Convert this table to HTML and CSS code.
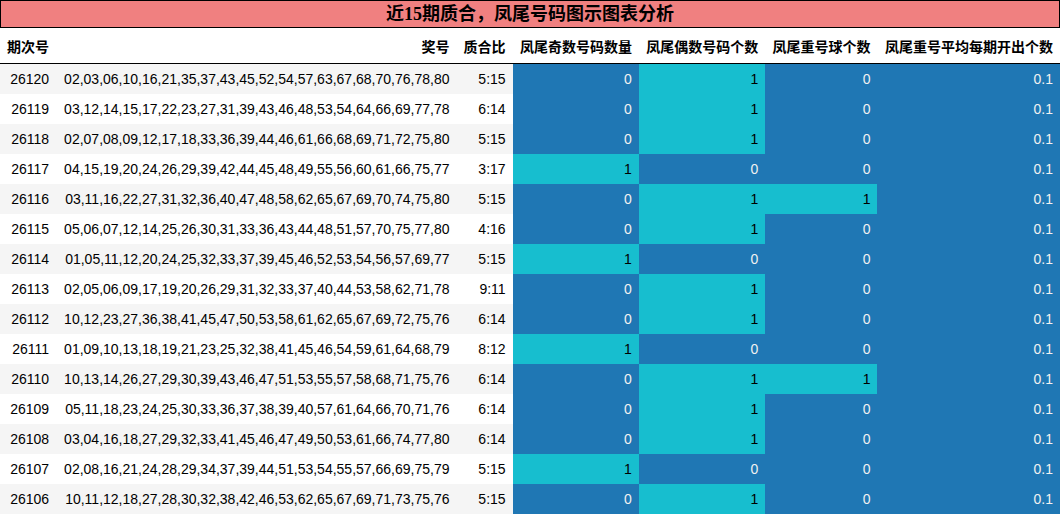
FILE: index.html
```html
<!DOCTYPE html>
<html lang="zh">
<head>
<meta charset="utf-8">
<title>近15期质合，凤尾号码图示图表分析</title>
<link rel="stylesheet" href="styles.css">
</head>
<body>
<table class="grid">
<caption class="title">近15期质合，凤尾号码图示图表分析</caption>
<thead>
<tr><th class="first">期次号</th><th>奖号</th><th>质合比</th><th>凤尾奇数号码数量</th><th>凤尾偶数号码个数</th><th>凤尾重号球个数</th><th>凤尾重号平均每期开出个数</th></tr>
</thead>
<tbody>
<tr><td>26120</td><td>02,03,06,10,16,21,35,37,43,45,52,54,57,63,67,68,70,76,78,80</td><td>5:15</td><td class="b">0</td><td class="c">1</td><td class="b">0</td><td class="b">0.1</td></tr>
<tr><td>26119</td><td>03,12,14,15,17,22,23,27,31,39,43,46,48,53,54,64,66,69,77,78</td><td>6:14</td><td class="b">0</td><td class="c">1</td><td class="b">0</td><td class="b">0.1</td></tr>
<tr><td>26118</td><td>02,07,08,09,12,17,18,33,36,39,44,46,61,66,68,69,71,72,75,80</td><td>5:15</td><td class="b">0</td><td class="c">1</td><td class="b">0</td><td class="b">0.1</td></tr>
<tr><td>26117</td><td>04,15,19,20,24,26,29,39,42,44,45,48,49,55,56,60,61,66,75,77</td><td>3:17</td><td class="c">1</td><td class="b">0</td><td class="b">0</td><td class="b">0.1</td></tr>
<tr><td>26116</td><td>03,11,16,22,27,31,32,36,40,47,48,58,62,65,67,69,70,74,75,80</td><td>5:15</td><td class="b">0</td><td class="c">1</td><td class="c">1</td><td class="b">0.1</td></tr>
<tr><td>26115</td><td>05,06,07,12,14,25,26,30,31,33,36,43,44,48,51,57,70,75,77,80</td><td>4:16</td><td class="b">0</td><td class="c">1</td><td class="b">0</td><td class="b">0.1</td></tr>
<tr><td>26114</td><td>01,05,11,12,20,24,25,32,33,37,39,45,46,52,53,54,56,57,69,77</td><td>5:15</td><td class="c">1</td><td class="b">0</td><td class="b">0</td><td class="b">0.1</td></tr>
<tr><td>26113</td><td>02,05,06,09,17,19,20,26,29,31,32,33,37,40,44,53,58,62,71,78</td><td>9:11</td><td class="b">0</td><td class="c">1</td><td class="b">0</td><td class="b">0.1</td></tr>
<tr><td>26112</td><td>10,12,23,27,36,38,41,45,47,50,53,58,61,62,65,67,69,72,75,76</td><td>6:14</td><td class="b">0</td><td class="c">1</td><td class="b">0</td><td class="b">0.1</td></tr>
<tr><td>26111</td><td>01,09,10,13,18,19,21,23,25,32,38,41,45,46,54,59,61,64,68,79</td><td>8:12</td><td class="c">1</td><td class="b">0</td><td class="b">0</td><td class="b">0.1</td></tr>
<tr><td>26110</td><td>10,13,14,26,27,29,30,39,43,46,47,51,53,55,57,58,68,71,75,76</td><td>6:14</td><td class="b">0</td><td class="c">1</td><td class="c">1</td><td class="b">0.1</td></tr>
<tr><td>26109</td><td>05,11,18,23,24,25,30,33,36,37,38,39,40,57,61,64,66,70,71,76</td><td>6:14</td><td class="b">0</td><td class="c">1</td><td class="b">0</td><td class="b">0.1</td></tr>
<tr><td>26108</td><td>03,04,16,18,27,29,32,33,41,45,46,47,49,50,53,61,66,74,77,80</td><td>6:14</td><td class="b">0</td><td class="c">1</td><td class="b">0</td><td class="b">0.1</td></tr>
<tr><td>26107</td><td>02,08,16,21,24,28,29,34,37,39,44,51,53,54,55,57,66,69,75,79</td><td>5:15</td><td class="c">1</td><td class="b">0</td><td class="b">0</td><td class="b">0.1</td></tr>
<tr><td>26106</td><td>10,11,12,18,27,28,30,32,38,42,46,53,62,65,67,69,71,73,75,76</td><td>5:15</td><td class="b">0</td><td class="c">1</td><td class="b">0</td><td class="b">0.1</td></tr>
</tbody>
</table>
</body>
</html>
```
FILE: styles.css
```css
html, body {
  margin: 0;
  padding: 0;
  background: #ffffff;
}
body {
  font-family: "Liberation Sans", Arial, "Noto Sans CJK SC", sans-serif;
  font-size: 14px;
  color: #000000;
}
.grid {
  width: 1060px;
  border-collapse: collapse;
  border-spacing: 0;
}
.title {
  box-sizing: border-box;
  height: 28px;
  line-height: 26px;
  background: #f08080;
  border: 1px solid #000000;
  font-family: "Liberation Serif", "Noto Sans CJK SC", serif;
  font-weight: bold;
  font-size: 18px;
  text-align: center;
  color: #000000;
}
.grid th {
  height: 35px;
  padding: 0 7px;
  text-align: right;
  font-weight: bold;
  font-size: 14px;
  white-space: nowrap;
  border-bottom: 1px solid #000000;
  font-family: "Liberation Sans", "Noto Sans CJK SC", sans-serif;
}
.grid th.first {
  text-align: left;
}
.grid td {
  height: 30px;
  padding: 0 7px;
  text-align: right;
  white-space: nowrap;
  box-sizing: border-box;
}
.grid tbody tr:nth-child(odd) {
  background: #f5f5f5;
}
.grid tbody tr:nth-child(even) {
  background: #ffffff;
}
.grid td.b {
  background: #1f77b4;
  color: #f1f1f1;
}
.grid td.c {
  background: #17becf;
  color: #000000;
}
```
